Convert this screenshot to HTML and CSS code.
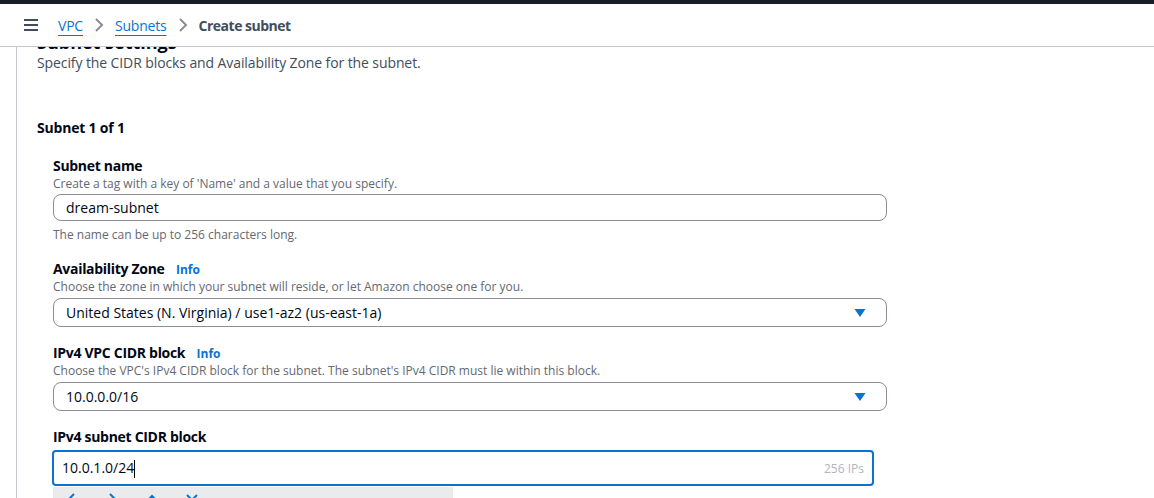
FILE: index.html
```html
<!DOCTYPE html>
<html>
<head>
<meta charset="utf-8">
<link rel="stylesheet" href="styles.css">
</head>
<body>
<div class="topbar"></div>
<div class="crumbs">
  <svg class="burger" width="14" height="14" viewBox="0 0 14 14"><path d="M0 2h14M0 7h14M0 12h14" stroke="#414d5c" stroke-width="2" fill="none"/></svg>
  <a class="crumb-link">VPC</a>
  <svg class="chev" width="16" height="16" viewBox="0 0 16 16"><path d="M5 2l6 6-6 6" stroke="#8c8c94" stroke-width="2" fill="none"/></svg>
  <a class="crumb-link">Subnets</a>
  <svg class="chev" width="16" height="16" viewBox="0 0 16 16"><path d="M5 2l6 6-6 6" stroke="#8c8c94" stroke-width="2" fill="none"/></svg>
  <span class="crumb-current">Create subnet</span>
</div>
<div class="panel">
  <div class="panel-head">
    <h2 class="panel-title">Subnet settings</h2>
    <p class="panel-desc">Specify the CIDR blocks and Availability Zone for the subnet.</p>
  </div>
  <div class="subnet">
    <h3 class="subnet-title">Subnet 1 of 1</h3>
    <div class="fields">
      <div class="field">
        <div class="label">Subnet name</div>
        <div class="desc">Create a tag with a key of 'Name' and a value that you specify.</div>
        <div class="input">dream-subnet</div>
        <div class="constraint">The name can be up to 256 characters long.</div>
      </div>
      <div class="field">
        <div class="label">Availability Zone <span class="info">Info</span></div>
        <div class="desc">Choose the zone in which your subnet will reside, or let Amazon choose one for you.</div>
        <div class="input select"><span>United States (N. Virginia) / use1-az2 (us-east-1a)</span><svg width="12" height="10" viewBox="0 0 12 10"><path d="M0.5 1h11L6 9z" fill="#0972d3"/></svg></div>
      </div>
      <div class="field">
        <div class="label">IPv4 VPC CIDR block <span class="info">Info</span></div>
        <div class="desc">Choose the VPC's IPv4 CIDR block for the subnet. The subnet's IPv4 CIDR must lie within this block.</div>
        <div class="input select"><span>10.0.0.0/16</span><svg width="12" height="10" viewBox="0 0 12 10"><path d="M0.5 1h11L6 9z" fill="#0972d3"/></svg></div>
      </div>
      <div class="field">
        <div class="label">IPv4 subnet CIDR block</div>
        <div class="input focused"><span class="val">10.0.1.0/24<span class="caret"></span></span><span class="ips">256 IPs</span></div>
        <div class="stepper">
          <svg width="14" height="14" viewBox="0 0 14 14"><path d="M9 2L4 7l5 5" stroke="#0972d3" stroke-width="2" fill="none"/></svg>
          <svg width="14" height="14" viewBox="0 0 14 14"><path d="M5 2l5 5-5 5" stroke="#0972d3" stroke-width="2" fill="none"/></svg>
          <svg width="14" height="14" viewBox="0 0 14 14"><path d="M2 9l5-5 5 5" stroke="#0972d3" stroke-width="2" fill="none"/></svg>
          <svg width="14" height="14" viewBox="0 0 14 14"><path d="M2 3l10 10M12 3L2 13" stroke="#0972d3" stroke-width="2" fill="none"/></svg>
        </div>
      </div>
    </div>
  </div>
</div>
</body>
</html>
```
FILE: styles.css
```css
* { box-sizing: border-box; }
html, body { margin: 0; padding: 0; background: #fff; overflow: hidden; height: 498px; }
body { font-family: "Open Sans", "Noto Sans", sans-serif; color: #000716; font-size: 14px; }
.topbar { height: 4px; background: #161d26; }
.crumbs { height: 43px; display: flex; align-items: center; padding-left: 24px; border-bottom: 1px solid #c6c6cd; position: relative; z-index: 2; background: #fff; }
.burger { margin-right: 20px; }
.crumb-link { color: #0972d3; text-decoration: underline; text-underline-offset: 4px; font-size: 14px; letter-spacing: -0.2px; }
.chev { margin: 0 8px; }
.crumb-current { color: #414d5c; font-weight: 700; font-size: 14px; letter-spacing: -0.5px; }
.panel { margin-left: 16px; border-left: 1px solid #c6c6cd; margin-top: -16px; padding-left: 20px; height: 600px; }
.panel-title { margin: 0; font-size: 18px; line-height: 22px; font-weight: 700; }
.panel-desc { margin: 0; line-height: 20px; color: #414d5c; letter-spacing: -0.1px; }
.subnet { padding-top: 45px; }
.subnet-title { margin: 0; font-size: 14px; font-weight: 700; line-height: 20px; letter-spacing: -0.2px; }
.fields { padding-left: 16px; padding-top: 18px; display: flex; flex-direction: column; gap: 16px; }
.field { display: flex; flex-direction: column; width: 834px; }
.field-last { margin-top: 1px; }
.label { font-weight: 700; font-size: 14px; line-height: 20px; height: 20px; letter-spacing: -0.3px; }
.info { color: #0972d3; font-size: 12px; font-weight: 700; margin-left: 8px; letter-spacing: 0; line-height: 16px; }
.desc { font-size: 12px; line-height: 16px; height: 16px; color: #656871; }
.input { margin-top: 2px; height: 27px; border: 1px solid #8c8c94; border-radius: 8px; padding: 0 12px; display: flex; align-items: center; justify-content: space-between; font-size: 14px; }
.select { margin-top: 3px; height: 29px; }
.select svg { margin-right: 8px; }
.constraint { font-size: 12px; line-height: 16px; color: #656871; margin-top: 6px; }
.focused { width: 822px; margin-left: -1px; margin-top: 3px; height: 36px; border: 2px solid #0972d3; border-radius: 4px; padding: 0 8px; }
.caret { display: inline-block; width: 1px; height: 18px; background: #000; vertical-align: middle; }
.ips { color: #b4b4bb; font-size: 12px; }
.stepper { width: 400px; height: 20px; background: #e9ebed; margin-top: 1px; display: flex; gap: 26px; padding-left: 12px; padding-top: 5px; }
```
